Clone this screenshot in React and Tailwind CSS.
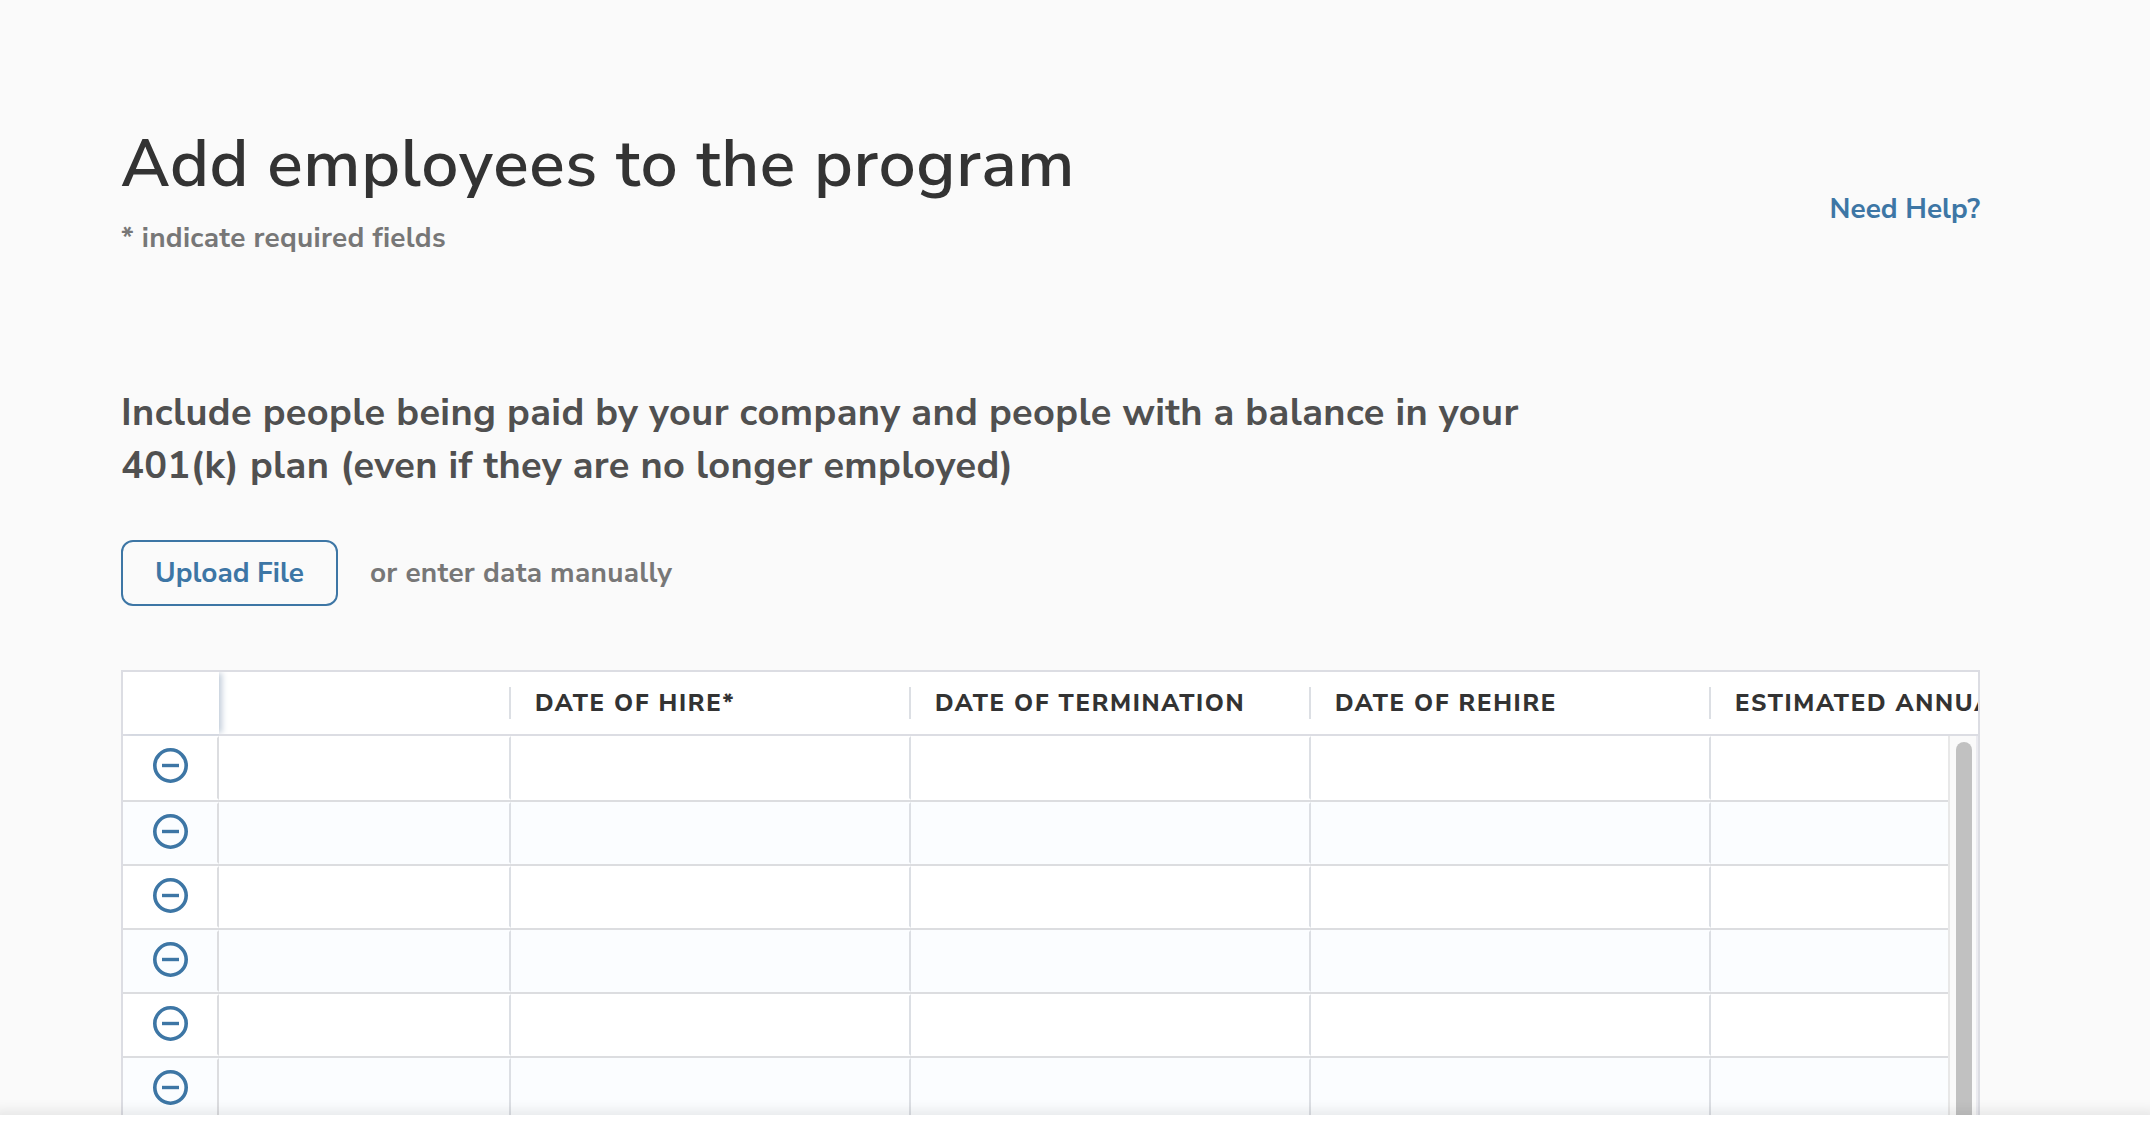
import React, { useState } from 'react';

const columns = ['', 'Date of hire*', 'Date of termination', 'Date of rehire', 'Estimated annual hours'];

function RemoveIcon() {
  return (
    <svg className="size-9" viewBox="0 0 36 36" fill="none" stroke="currentColor" aria-hidden="true">
      <circle cx="18.5" cy="17.5" r="15.7" strokeWidth="3.6" />
      <path d="M10 17.5h17" strokeWidth="3.4" />
    </svg>
  );
}

function EmployeeRow({ row, onRemove }) {
  return (
    <tr className="h-16 align-top bg-white even:bg-[#fbfdff] first:h-[66px]">
      <td className="h-[inherit] border-b-2 border-[#dcdde0] p-0">
        <div className="flex h-full justify-center border-y-2 border-r-2 border-y-transparent border-r-[#dcdde0] pt-[10px]">
          <button
            type="button"
            aria-label={`Remove row ${row}`}
            onClick={onRemove}
            className="h-9 cursor-pointer text-[#3d76a5]"
          >
            <RemoveIcon />
          </button>
        </div>
      </td>
      {columns.map((col, idx) => (
        <td key={idx} className="h-[inherit] border-b-2 border-[#dcdde0] p-0">
          <input
            type="text"
            aria-label={`${col || 'Employee'}, row ${row}`}
            className="block h-full w-full border-y-2 border-r-2 border-y-transparent border-r-[#dcdfe4] px-6 text-2xl text-[#333] outline-none"
          />
        </td>
      ))}
    </tr>
  );
}

function EmployeeTable() {
  const [rows, setRows] = useState([1, 2, 3, 4, 5, 6, 7, 8]);

  const removeRow = (row) => setRows(prev => prev.filter(r => r !== row));

  return (
    <div className="relative mt-16 overflow-hidden border-2 border-[#dcdde3] bg-white">
      <table className="w-[1988px] table-fixed border-separate border-spacing-0">
        <colgroup>
          <col className="w-24" />
          <col className="w-[292px]" />
          <col className="w-[400px]" />
          <col className="w-[400px]" />
          <col className="w-[400px]" />
          <col className="w-[400px]" />
        </colgroup>
        <thead>
          <tr className="h-16">
            <th aria-label="Remove" className="border-b-2 border-[#dcdde3] p-0">
              <div className="h-[62px] shadow-[4px_0_6px_-1px_#c3cedb]"></div>
            </th>
            {columns.map((col, idx) => (
              <th key={idx} className="border-b-2 border-[#dcdde3] p-0 text-left">
                <div className="flex h-8 items-center border-r-2 border-[#dcdfe4] pl-6 text-2xl font-extrabold tracking-[0.07em] whitespace-nowrap text-[#333] uppercase">
                  {col}
                </div>
              </th>
            ))}
          </tr>
        </thead>
        <tbody>
          {rows.map(row => (
            <EmployeeRow key={row} row={row} onRemove={() => removeRow(row)} />
          ))}
        </tbody>
      </table>

      {/* Scrollbar track */}
      <div className="absolute top-16 right-0 bottom-0 w-[30px] border-r-2 border-l-2 border-r-[#ebebf0] border-l-[#e8e8e8] bg-[#fafafa] px-[6px] pt-[6px]">
        <div className="h-full w-4 rounded-full bg-[#c1c1c1]"></div>
      </div>
    </div>
  );
}

export default function App() {
  return (
    <div className="flex h-screen flex-col bg-[#fafafa] font-['Nunito_Sans','Nunito','Open_Sans',sans-serif]">
      <main className="min-h-0 flex-1 overflow-hidden pt-[120px] pr-[170px] pl-[121px]">
        <header className="flex items-center justify-between">
          <div>
            <h1 className="text-[66px] leading-[88px] font-semibold tracking-[0.01em] text-[#333]">Add employees to the program</h1>
            <p className="mt-2 text-[28px] leading-[44px] font-bold tracking-[0.01em] text-[#777]">* indicate required fields</p>
          </div>
          <a href="#help" className="mt-[38px] text-[28px] leading-[44px] font-bold text-[#3d76a5]">Need Help?</a>
        </header>

        <h2 className="mt-[126px] max-w-[1440px] text-[38px] leading-[53px] font-bold tracking-[0.01em] text-[#505050]">
          Include people being paid by your company and people with a balance in your 401(k) plan (even if they are no longer employed)
        </h2>

        <div className="mt-12 flex items-center gap-8">
          <button
            type="button"
            className="h-[66px] cursor-pointer rounded-xl border-2 border-[#3d76a5] px-8 text-[28px] font-bold text-[#3d76a5]"
          >
            Upload File
          </button>
          <span className="text-[28px] font-bold tracking-[0.01em] text-[#777]">or enter data manually</span>
        </div>

        <EmployeeTable />
      </main>

      <footer className="relative h-2 bg-white shadow-[0_4px_14px_8px_rgba(0,0,0,0.09)]"></footer>
    </div>
  );
}
